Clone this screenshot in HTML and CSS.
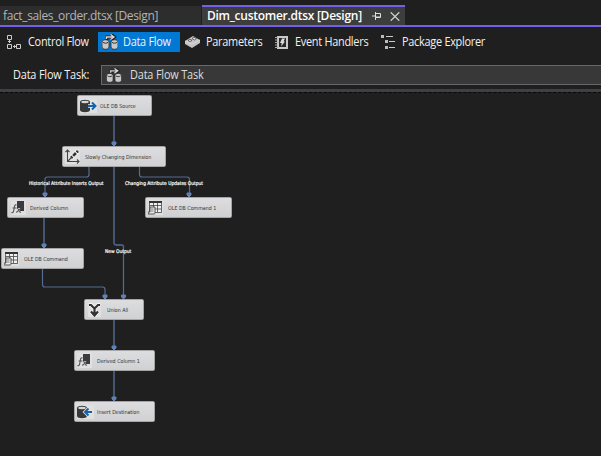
FILE: index.html
```html
<!DOCTYPE html>
<html lang="en">
<head>
<meta charset="utf-8">
<title>Dim_customer.dtsx [Design]</title>
<link rel="stylesheet" href="styles.css">
</head>
<body>
<svg class="defs" width="0" height="0" aria-hidden="true">
  <symbol id="flow" viewBox="0 0 16 16">
    <path d="M5 6V3h6M9 0l3.500 3L9 6" fill="none" stroke="#1d1d1d" stroke-width="3"/>
    <path d="M4.500 5V3H11M8.500.5 12 3 8.500 5.500" fill="none" stroke="#d5d5d5" stroke-width="1.400"/>
    <path d="M0 8c0-3 7-3 7 0v5c0 3-7 3-7 0zM9 8c0-3 7-3 7 0v5c0 3-7 3-7 0z" fill="#c9c9c9" stroke="#292929" stroke-width=".8"/>
    <path d="M1 8.300c1 1.200 4 1.200 5 0M10 8.300c1 1.200 4 1.200 5 0" fill="none" stroke="#333"/>
  </symbol>
  <symbol id="db" viewBox="0 0 18 14">
    <path d="M0 3c0-3 10-3 10 0v8c0 3-10 3-10 0z" fill="#383838"/>
    <ellipse cx="5" cy="3" rx="3.800" ry="1.200" fill="#d5d5d5"/>
  </symbol>
  <symbol id="fx" viewBox="0 0 15 15">
    <path d="M6 1h7v10H9V8H6z" fill="#3b3b3d"/>
    <path d="M5.500 5C3 4 3.500 8 2.600 11c-.4 1.700-1 2-2.200 1.600M1.500 8h4M6 8.500c2-.8 2 4.700 4 3.600M10 8.500c-2 .2-3 4-5 3.600" fill="none" stroke="#555" stroke-width="1.100"/>
  </symbol>
  <symbol id="table" viewBox="0 0 15 15">
    <path d="M1.500 1.500h12v11h-12zM1.500 5.500h12M1.500 9h12M5.500 3v9M9.500 3v9" fill="#f0f0f0" stroke="#444" stroke-width=".8"/>
    <path d="M1 1h13v2H1z" fill="#333"/>
    <path d="M2 7h5v6c0 1-1 1-1 1H0v-2h2z" fill="#e8e8e8" stroke="#444" stroke-width=".9"/>
    <path d="M3 9h2.500M3 11h2.500" stroke="#555" stroke-width=".7"/>
  </symbol>
</svg>

<header class="tabs">
  <div class="tab"><span class="t-fact">fact_sales_order.dtsx [Design]</span></div>
  <div class="tab active"><span class="t-dim">Dim_customer.dtsx [Design]</span>
    <svg class="pin" width="9" height="8" viewBox="0 0 9 8"><path d="M0 4h3M3.500 0v8M4 1.500h4.500v4H4M4 5h4" fill="none" stroke="#ddd"/></svg>
    <svg class="close" width="10" height="9" viewBox="0 0 10 9"><path d="M.7.3l8.600 8.400M9.300.3.7 8.700" stroke="#d5d5d5" stroke-width="1.200"/></svg>
  </div>
</header>

<nav class="views">
  <div class="view control"><svg width="15" height="15" viewBox="0 0 15 15"><path d="M.5.5h4v4h-4zM.5 9.500h4v4h-4zM9.500 9.500h4v4h-4zM2.500 5v3M1 6.500h3M6 11.500h3M7.500 10v3" fill="none" stroke="#ccc"/></svg><span>Control Flow</span></div>
  <div class="view data"><svg width="16" height="16"><use href="#flow"/></svg><span>Data Flow</span></div>
  <div class="view params"><svg width="15" height="12" viewBox="0 0 15 12"><path d="M0 5 8 0l7 4v3l-8 5-7-4z" fill="#c5c5c5"/><path d="m3 4.500 2-1.200 2 1-2 1.300zM7 2.500 9 1.300l2.500 1.200L9.300 4z" fill="#eee" stroke="#333" stroke-width=".7"/><path d="m0 5 7 3 8-4" fill="none" stroke="#e8e8e8" stroke-width=".6"/></svg><span>Parameters</span></div>
  <div class="view events"><svg width="13" height="13" viewBox="0 0 13 13"><path d="M2 0h11v13H2z" fill="#c9c9c9"/><path d="M4 2h7v9H4z" fill="#292929"/><path d="M0 1.500h3M0 4h3M0 6.500h3M0 9h3M0 11.500h3" stroke="#aaa"/><path d="M7 2.500h3L8.500 5.500H10L6 10.500l.8-3.500H5z" fill="#ddd"/></svg><span>Event Handlers</span></div>
  <div class="view explorer"><svg width="14" height="14" viewBox="0 0 14 14"><path d="M0 0h3v3H0zM4 5h3v3H4zM4 11h3v3H4z" fill="#bbb"/><path d="M5 1.500h7M8 6.500h6M8 12.500h6" stroke="#ccc"/></svg><span>Package Explorer</span></div>
</nav>

<div class="task">
  <label>Data Flow Task:</label>
  <div class="combo"><svg width="16" height="15" viewBox="0 0 16 16"><use href="#flow"/></svg><span>Data Flow Task</span></div>
</div>
<div class="divider"></div>

<main class="canvas">
  <svg class="wires" width="601" height="363" viewBox="0 93 601 363">
    <g class="thick">
      <path d="M114 116v27M114 167v75.500q0 2.500 2.500 2.500h5q2 0 2 2M44 218v27M114 320v27M114 371v27"/>
    </g>
    <path d="M89 167v7.500q0 2.500-2.500 2.500h-39q-2.500 0-2.500 2.500v14M139.500 167v7.500q0 2.500 2.500 2.500h45q2.500 0 2.500 2.500v14M123.500 247v49M42.500 269v15.500q0 2.500 2.500 2.500h57.500q2.500 0 2.500 2.500v7"/>
    <g class="heads">
      <path d="M112 142h4v2l-2 2-2-2zM43 193h4v2l-2 2-2-2zM187 193h4v2l-2 2-2-2zM42 244h4v2l-2 2-2-2zM103 295h4v2l-2 2-2-2zM121.500 295h4v2l-2 2-2-2zM112 346h4v2l-2 2-2-2zM112 397h4v2l-2 2-2-2z"/>
    </g>
  </svg>

  <div class="node source"><svg width="17" height="14" viewBox="0 0 17 14"><use href="#db" width="18" height="14"/><path d="M8 7h6M11.500 3.500 15 7l-3.500 3.500" fill="none" stroke="#e8e8e8" stroke-width="3.500"/><path d="M8 7h7M12 3.500 15.500 7 12 10.500" fill="none" stroke="#1763aa" stroke-width="2"/></svg><span>OLE DB Source</span></div>
  <div class="node scd"><svg width="15" height="15" viewBox="0 0 15 15"><path d="M2.500 1v11.500H14M.5 3l2-2 2 2M12 10.500l2 2-2 2M3 12l3-3" fill="none" stroke="#444" stroke-width="1.100"/><path d="M6 9l7-7" stroke="#fff" stroke-width="4"/><path d="m6 9 7-7" stroke="#333" stroke-width="2.800" stroke-dasharray="2 1 4 1"/></svg><span>Slowly Changing Dimension</span></div>
  <div class="node derived"><svg width="15" height="15"><use href="#fx"/></svg><span>Derived Column</span></div>
  <div class="node command1"><svg width="15" height="15"><use href="#table"/></svg><span>OLE DB Command 1</span></div>
  <div class="node command"><svg width="15" height="15"><use href="#table"/></svg><span>OLE DB Command</span></div>
  <div class="node union"><svg width="13" height="14" viewBox="0 0 13 14"><path d="M1 2h2l3.500 3.500L10 2h2M6.500 5v7M3 8.500l3.500 4 3.500-4" fill="none" stroke="#f4f4f4" stroke-width="4"/><path d="M1 2h2l3.500 3.500L10 2h2M6.500 5v7M3 8.500l3.500 4 3.500-4" fill="none" stroke="#333" stroke-width="2.200"/></svg><span>Union All</span></div>
  <div class="node derived1"><svg width="15" height="15"><use href="#fx"/></svg><span>Derived Column 1</span></div>
  <div class="node insert"><svg width="17" height="14" viewBox="0 0 17 14"><use href="#db" width="18" height="14"/><path d="M15 7H9M11.500 3.500 8 7l3.500 3.500" fill="none" stroke="#e8e8e8" stroke-width="3.500"/><path d="M15 7H8M11.500 3.500 8 7l3.500 3.500" fill="none" stroke="#1763aa" stroke-width="2"/></svg><span>Insert Destination</span></div>

  <span class="wire-label historical">Historical Attribute Inserts Output</span>
  <span class="wire-label changing">Changing Attribute Updates Output</span>
  <span class="wire-label new">New Output</span>
</main>
</body>
</html>
```
FILE: styles.css
```css
* { box-sizing: border-box; }
body {
  margin: 0;
  height: 456px;
  overflow: hidden;
  background: #1f1f1f;
  color: #f1f1f1;
  font: 12px/16px "Open Sans", "Noto Sans", sans-serif;
  white-space: nowrap;
}
svg { display: block; flex: none; }
.defs { position: absolute; }

.tabs {
  display: flex;
  align-items: flex-end;
  height: 27px;
  border-bottom: 2px solid #7160e8;
}
.tab {
  display: flex;
  align-items: center;
  width: 201px;
  height: 19px;
  margin-right: 1px;
  padding-left: 3px;
  background: #2d2d2d;
  color: #b4b4b4;
}
.tab.active {
  width: 203px;
  height: 20px;
  margin: 0;
  padding-left: 5px;
  border-top: 2px solid #7160e8;
  background: #3d3d3d;
  color: #fff;
  font-weight: 600;
}
.t-fact { letter-spacing: -.37px; }
.t-dim { width: 155px; letter-spacing: -.27px; }
.pin { margin-left: 10px; }
.close { margin-left: 9px; }

.views { display: flex; height: 29px; padding: 5px 0 4px 7px; }
.view { display: flex; align-items: center; height: 20px; letter-spacing: -.3px; }
.view span, .combo span, .task label { transform: scaleX(.91); transform-origin: left; }
.view.control { width: 91px; gap: 6px; }
.view.data { width: 82px; padding-left: 4px; gap: 5px; background: #0078d4; }
.view.params { width: 95px; padding-left: 5px; gap: 6px; }
.view.events { width: 106px; gap: 7px; }
.view.explorer { gap: 7px; }

.task { display: flex; height: 33px; padding: 9px 0 4px 13px; letter-spacing: -.2px; }
.task label { width: 88px; line-height: 19px; }
.combo {
  display: flex;
  align-items: center;
  flex: 1;
  gap: 8px;
  height: 20px;
  padding-left: 4px;
  border: 1px solid #686868;
  border-right: 0;
  background: #383838;
  color: #ddd;
}
.divider {
  height: 4px;
  border-top: 3px solid #3f4046;
  border-bottom: 1px dashed #080808;
}

.canvas { position: relative; height: 363px; font-family: "DejaVu Sans", sans-serif; }
.wires { position: absolute; inset: 0; fill: none; stroke: #536d93; stroke-width: 1.2; }
.wires .thick { stroke: #465b7b; stroke-width: 1.8; }
.wires .heads { fill: #6180b3; stroke: #6180b3; stroke-width: 1; }
.node {
  position: absolute;
  display: flex;
  align-items: center;
  gap: 5px;
  height: 21px;
  padding-left: 2px;
  border: 1px solid #a5a5a5;
  border-radius: 1.5px;
  background: linear-gradient(#dddde0, #d0d1d2);
  color: #333;
  font-size: 5.5px;
  line-height: 8px;
}
.node svg { background: #e0e0e1; }
.node span { transform: scaleX(.865); transform-origin: left; }
.source { left: 77px; top: 2px; width: 75px; gap: 3px; }
.scd { left: 62px; top: 53px; width: 104px; }
.derived { left: 7px; top: 104px; width: 77px; padding-left: 3px; gap: 4px; }
.command1 { left: 145px; top: 104px; width: 87px; }
.command { left: 1px; top: 155px; width: 83px; }
.union { left: 84px; top: 206px; width: 60px; padding-left: 3px; gap: 6px; }
.derived1 { left: 74px; top: 257px; width: 81px; }
.insert { left: 74px; top: 308px; width: 81px; gap: 3px; }

.wire-label {
  position: absolute;
  color: #fff;
  font-size: 5px;
  line-height: 8px;
  -webkit-text-stroke: .2px #fff;
  transform: scaleX(.88);
  transform-origin: left;
}
.historical { left: 29px; top: 86px; }
.changing { left: 125px; top: 86px; }
.new { left: 105px; top: 154px; }
```
